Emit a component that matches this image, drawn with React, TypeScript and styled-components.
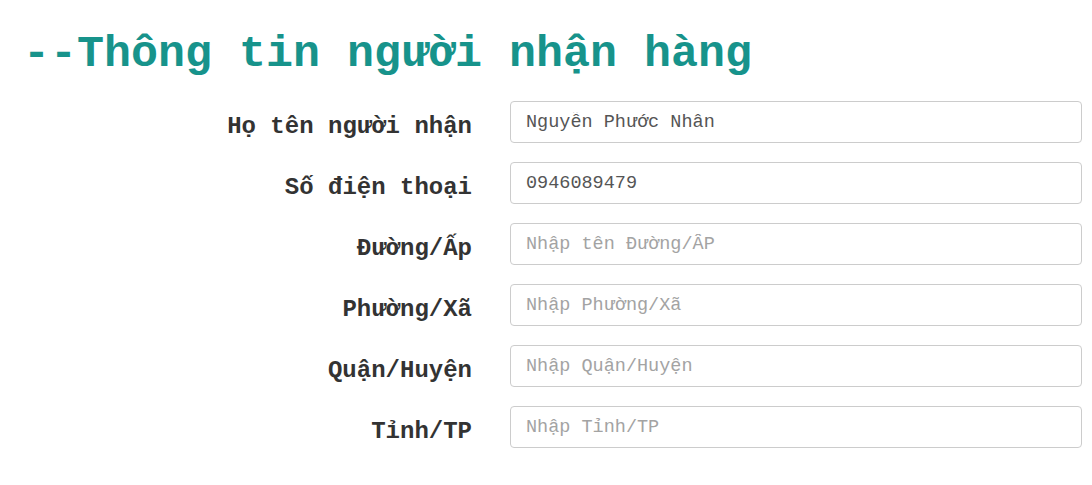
import React from 'react';
import styled, { createGlobalStyle } from 'styled-components';

const GlobalStyle = createGlobalStyle`
  body {
    margin: 0;
    background: #fff;
    font-family: "Courier New", "Liberation Mono", monospace;
  }
`;

const ReceiverSection = styled.section`
  width: 1092px;
  padding-top: 27px;
`;

const SectionTitle = styled.h2`
  margin: 0 0 19px 23px;
  font-size: 45px;
  line-height: 55px;
  font-weight: 700;
  color: #17938b;
`;

const FormGrid = styled.div`
  display: grid;
  grid-template-columns: 472px 572px;
  column-gap: 38px;
  row-gap: 19px;
`;

const FieldLabel = styled.label`
  align-self: center;
  padding-top: 8px;
  text-align: right;
  font-size: 24px;
  font-weight: 700;
  color: #333;
`;

const FieldInput = styled.input`
  box-sizing: border-box;
  height: 42px;
  padding: 0 15px;
  border: 1px solid #ccc;
  border-radius: 4px;
  font-family: "Courier New", "Liberation Mono", monospace;
  font-size: 18.5px;
  color: #555;
  outline: none;

  &::placeholder {
    color: #a3a3a3;
  }
`;

const fields = [
  { label: 'Họ tên người nhận', value: 'Nguyễn Phước Nhân', placeholder: '' },
  { label: 'Số điện thoại', value: '0946089479', placeholder: '' },
  { label: 'Đường/Ấp', value: '', placeholder: 'Nhập tên Đường/ẤP' },
  { label: 'Phường/Xã', value: '', placeholder: 'Nhập Phường/Xã' },
  { label: 'Quận/Huyện', value: '', placeholder: 'Nhập Quận/Huyện' },
  { label: 'Tỉnh/TP', value: '', placeholder: 'Nhập Tỉnh/TP' },
];

function App() {
  return (
    <>
      <GlobalStyle />
      <ReceiverSection>
        <SectionTitle>--Thông tin người nhận hàng</SectionTitle>
        <FormGrid>
          {fields.map((f) => (
            <React.Fragment key={f.label}>
              <FieldLabel>{f.label}</FieldLabel>
              <FieldInput defaultValue={f.value} placeholder={f.placeholder} />
            </React.Fragment>
          ))}
        </FormGrid>
      </ReceiverSection>
    </>
  );
}

export default App;
